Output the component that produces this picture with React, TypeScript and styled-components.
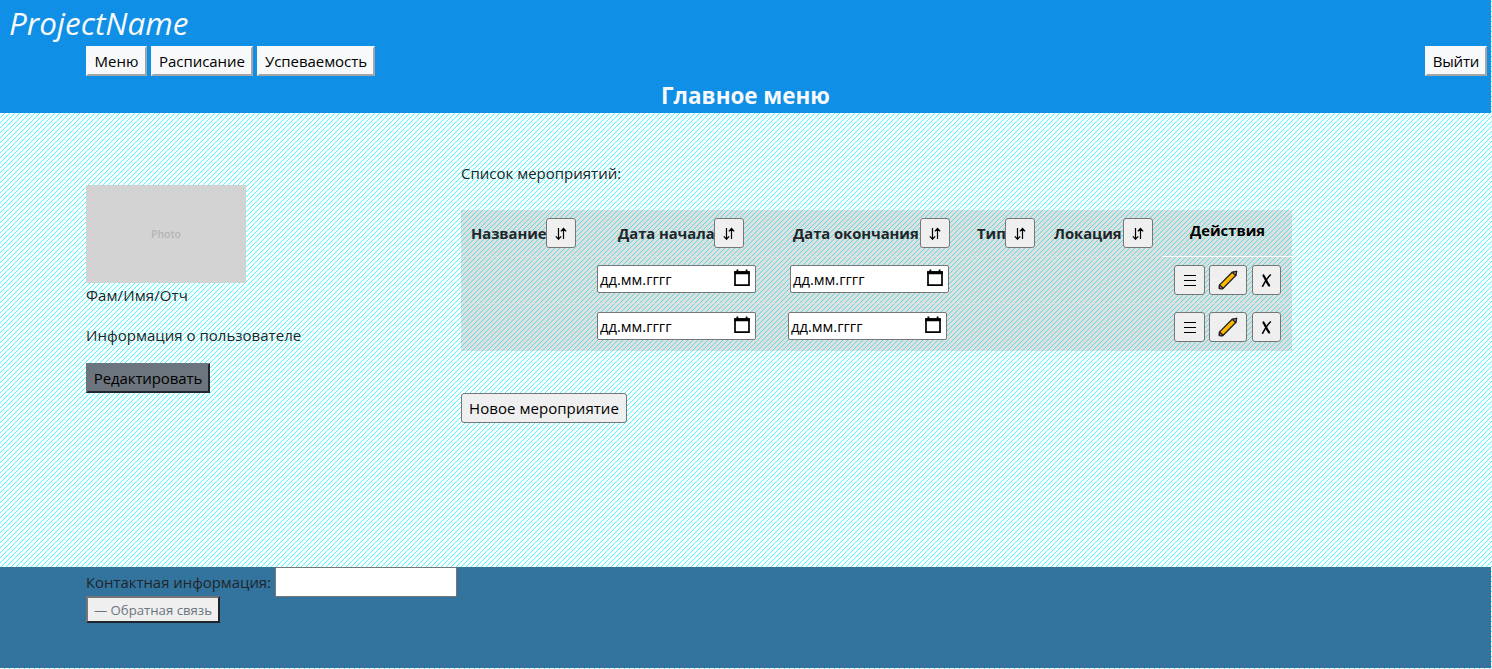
import React from "react";
import styled, { createGlobalStyle } from "styled-components";

const stripes = `url("data:image/svg+xml,${encodeURIComponent(
  '<svg xmlns="http://www.w3.org/2000/svg" width="5" height="5" shape-rendering="crispEdges"><path fill="#4ff" d="M2 0h1v1h-1zM1 1h1v1h-1zM0 2h1v1h-1zM4 3h1v1h-1zM3 4h1v1h-1z"/></svg>'
)}")`;

const GlobalStyle = createGlobalStyle`
  * { box-sizing: border-box; }
  body {
    margin: 0;
    background: #fff ${stripes};
    color: #212529;
    font: 16px/24px "Open Sans", "Noto Sans", sans-serif;
    overflow: hidden;
  }
`;

const Page = styled.div`
  width: 1491px;
  height: 668px;
  display: flex;
  flex-direction: column;
`;

const Header = styled.header`
  height: 113px;
  flex: none;
  background: #0f8fe5;
  color: #f8f9fa;
`;

const Brand = styled.div`
  height: 46px;
  padding-left: 9px;
  font: italic 31.5px/46px "Open Sans", sans-serif;
`;

const Nav = styled.nav`
  display: flex;
  gap: 4px;
  height: 30px;
  padding: 0 4px 0 86px;
`;

const Fit = styled.span<{ $track?: number }>`
  letter-spacing: ${(p) => p.$track ?? 0}px;
  white-space: nowrap;
`;

const NavButton = styled.button<{ $w: number; $end?: boolean }>`
  width: ${(p) => p.$w}px;
  height: 30px;
  padding: 0 0 1px;
  margin-left: ${(p) => (p.$end ? "auto" : "0")};
  background: #f8f9fa;
  border: 2px solid;
  border-color: #f8f9fa #a5a5a5 #a5a5a5 #f8f9fa;
  color: #000;
  font: 15px/24px "Open Sans", sans-serif;
  white-space: nowrap;
`;

const Title = styled.h1`
  margin: 4px 0 0;
  text-align: center;
  font: 700 22.4px/31px "Open Sans", sans-serif;
`;

const Main = styled.main`
  flex: 1;
  display: flex;
`;

const Profile = styled.aside`
  width: 461px;
  padding: 72px 0 0 86px;
  font-size: 15px;
`;

const Photo = styled.div`
  width: 160px;
  height: 98px;
  background: #d3d3d3;
  color: #b5b5b5;
  text-align: center;
  font: 600 10.5px/99px "Open Sans", sans-serif;
`;

const Line = styled.p<{ $gap?: number }>`
  margin: ${(p) => p.$gap ?? 0}px 0 0;
  height: 24px;
  line-height: 24px;
`;

const EditButton = styled.button`
  display: block;
  width: 124px;
  height: 30px;
  margin-top: 16px;
  padding: 0 0 1px;
  background: #6c757d;
  border: 2px solid;
  border-color: #6c757d #212529 #212529 #6c757d;
  color: #000;
  font: 15px/24px "Open Sans", sans-serif;
  white-space: nowrap;
`;

const Events = styled.section`
  padding-top: 48px;
  font-size: 15px;
`;

const Table = styled.div`
  width: 831px;
  height: 141px;
  margin: 25px 0 42px;
  background: rgba(128, 128, 128, 0.25);
`;

const Row = styled.div<{ $last?: boolean }>`
  display: grid;
  grid-template-columns: 125px 194px 186px 78px 118px 130px;
  height: 47px;
  padding-top: 8px;
  border-bottom: ${(p) => (p.$last ? "0" : "1px solid rgba(222, 226, 230, 0.6)")};
`;

const Heading = styled.div<{ $indent: number; $w: number }>`
  display: flex;
  margin-left: ${(p) => p.$indent}px;
  font: 700 14.8px/31px "Open Sans", sans-serif;
  white-space: nowrap;
  & > span { width: ${(p) => p.$w}px; }
`;

const ActionHeading = styled.div`
  height: 39px;
  margin-left: 1px;
  border-bottom: 1px solid #fff;
  color: #000;
  text-align: center;
  font: 700 14.8px/25px "Open Sans", sans-serif;
`;

const SmallButton = styled.button<{ $w?: number }>`
  width: ${(p) => p.$w ?? 30}px;
  height: 30px;
  flex: none;
  display: flex;
  align-items: center;
  justify-content: center;
  padding: 0;
  background: #efefef;
  border: 1px solid #767676;
  border-radius: 3px;
  color: #000;
`;

const DateField = styled.div<{ $indent: number }>`
  display: flex;
  justify-content: space-between;
  width: 159px;
  height: 28px;
  margin-left: ${(p) => p.$indent}px;
  padding: 1px 5px 0 2px;
  background: #fff;
  border: 1px solid #767676;
  border-radius: 2px;
  color: #000;
  font: 14.7px/25px "Open Sans", sans-serif;
`;

const Actions = styled.div`
  grid-column: 6;
  display: flex;
  gap: 4px;
  padding-left: 12px;
  & > :last-child { margin-left: 1px; }
`;

const NewButton = styled(SmallButton)`
  font: 15px/24px "Open Sans", sans-serif;
  white-space: nowrap;
`;

const Footer = styled.footer`
  height: 101px;
  flex: none;
  padding-left: 86px;
  background: #32749e;
`;

const Contact = styled.label`
  display: flex;
  height: 30px;
  font-size: 14.9px;
  line-height: 31px;
  & > span { width: 189px; }
`;

const ContactInput = styled.input`
  width: 182px;
  height: 30px;
  border: 1px solid #767676;
  background: #fff;
`;

const Feedback = styled.button`
  display: block;
  width: 134px;
  height: 27px;
  margin-top: -1px;
  padding: 0;
  background: #efefef;
  border: 2px solid;
  border-color: #767676 #212529 #212529 #767676;
  color: #6c757d;
  font: 13.2px/22px "Open Sans", sans-serif;
  white-space: nowrap;
`;

const SortIcon = () => (
  <svg width="14" height="14" viewBox="0 0 14 14" fill="none" stroke="#000" strokeWidth="1.2">
    <path d="M4.5 2v11M1.8 10.3l2.7 2.9 2.7-2.9M9.5 13V2.5M6.8 5.4l2.7-2.9 2.7 2.9" />
  </svg>
);

const CalendarSvg = styled.svg`
  margin-top: 2px;
`;

const CalendarIcon = () => (
  <CalendarSvg width="16" height="18" viewBox="0 0 16 18">
    <path d="M1 3h14v13.2H1z" fill="none" stroke="#000" strokeWidth="1.7" />
    <path d="M.2 2.2h15.6v3H.2zM2.5.5h1.8v2H2.5zM11.7.5h1.8v2h-1.8z" />
  </CalendarSvg>
);

const MenuIcon = () => (
  <svg width="12" height="12" viewBox="0 0 12 12" stroke="#000">
    <path d="M0 1.5h12M0 6.5h12M0 11.5h12" />
  </svg>
);

const PencilIcon = () => (
  <svg width="20" height="20" viewBox="0 0 20 20" stroke="#222" strokeWidth="1.3" strokeLinejoin="round">
    <path d="M1.2 18.7 1.6 14.9 14.2 2.3l4.4-1-.9 4.2L5.2 18.2z" fill="#ffb900" />
    <path d="m14.2 2.3 4.4-1-.9 4.2z" fill="#d8c0a8" />
    <path d="m1.6 14.9 3.6 3.3c-1.2 1.2-5 1.1-3.6-3.3z" fill="#f36f7d" />
  </svg>
);

const CrossIcon = () => (
  <svg width="12" height="14" viewBox="0 0 12 14" fill="none" stroke="#000">
    <path d="M1.7 2C4 3 6 11.5 8.8 13" strokeWidth="2.2" />
    <path d="M9.8 1.5C6.5 4.5 3.5 9.5 1.3 13.8" strokeWidth="1.6" />
  </svg>
);

const headings = [
  { text: "Название", indent: 10, w: 75 },
  { text: "Дата начала", indent: 32, w: 96 },
  { text: "Дата окончания", indent: 13, w: 127 },
  { text: "Тип", indent: 11, w: 28 },
  { text: "Локация", indent: 10, w: 69 },
];

const rows = [
  { start: 11, end: 10 },
  { start: 11, end: 8 },
];

export default function App() {
  return (
    <>
      <GlobalStyle />
      <Page>
        <Header>
          <Brand><Fit>ProjectName</Fit></Brand>
          <Nav>
            <NavButton $w={61}><Fit>Меню</Fit></NavButton>
            <NavButton $w={102}><Fit $track={-0.05}>Расписание</Fit></NavButton>
            <NavButton $w={118}><Fit $track={-0.05}>Успеваемость</Fit></NavButton>
            <NavButton $w={62} $end><Fit $track={-0.2}>Выйти</Fit></NavButton>
          </Nav>
          <Title><Fit>Главное меню</Fit></Title>
        </Header>
        <Main>
          <Profile>
            <Photo>Photo</Photo>
            <Line><Fit $track={0.1}>Фам/Имя/Отч</Fit></Line>
            <Line $gap={16}><Fit $track={0.02}>Информация о пользователе</Fit></Line>
            <EditButton><Fit $track={-0.1}>Редактировать</Fit></EditButton>
          </Profile>
          <Events>
            <Line><Fit>Список мероприятий:</Fit></Line>
            <Table>
              <Row>
                {headings.map((h) => (
                  <Heading key={h.text} $indent={h.indent} $w={h.w}>
                    <Fit $track={-0.05}>{h.text}</Fit>
                    <SmallButton><SortIcon /></SmallButton>
                  </Heading>
                ))}
                <ActionHeading>Действия</ActionHeading>
              </Row>
              {rows.map((r, i) => (
                <Row key={i} $last={i === rows.length - 1}>
                  <div />
                  <DateField $indent={r.start}><Fit>дд.мм.гггг</Fit><CalendarIcon /></DateField>
                  <DateField $indent={r.end}><Fit>дд.мм.гггг</Fit><CalendarIcon /></DateField>
                  <Actions>
                    <SmallButton $w={31}><MenuIcon /></SmallButton>
                    <SmallButton $w={38}><PencilIcon /></SmallButton>
                    <SmallButton $w={29}><CrossIcon /></SmallButton>
                  </Actions>
                </Row>
              ))}
            </Table>
            <NewButton $w={166}><Fit $track={0.05}>Новое мероприятие</Fit></NewButton>
          </Events>
        </Main>
        <Footer>
          <Contact><Fit>Контактная информация:</Fit><ContactInput /></Contact>
          <Feedback><Fit>— Обратная связь</Fit></Feedback>
        </Footer>
      </Page>
    </>
  );
}
